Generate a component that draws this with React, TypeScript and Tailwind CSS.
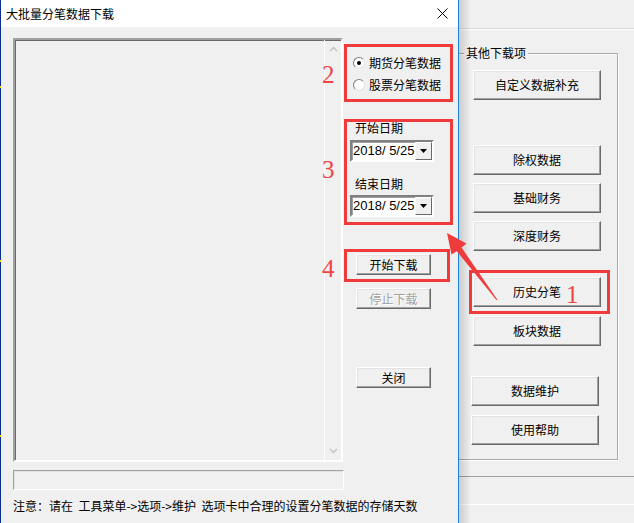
import clsx from 'clsx';
import type { ReactNode } from 'react';

const cjk = { fontFamily: '"Noto Sans CJK SC", "Noto Sans", sans-serif' };

function Btn({ children, className, disabled }: { children: ReactNode; className?: string; disabled?: boolean }) {
  return (
    <button
      className={clsx(
        'flex items-center justify-center bg-[#f0f0f0] border border-t-white border-l-white border-b-[#696969] border-r-[#696969] shadow-[inset_-1px_-1px_0_#a0a0a0,inset_1px_1px_0_#e3e3e3] text-[12px] leading-none whitespace-nowrap',
        disabled ? 'text-[#a0a0a0] [text-shadow:1px_1px_0_#fff]' : 'text-black',
        className
      )}
    >
      {children}
    </button>
  );
}

function Radio({ label, checked }: { label: string; checked?: boolean }) {
  return (
    <div className="flex items-center h-[16px] pl-[9px] gap-[4px]">
      <div className="w-[12px] h-[12px] shrink-0 rounded-full border border-t-[#808080] border-l-[#808080] border-b-[#e3e3e3] border-r-[#e3e3e3] bg-white flex items-center justify-center">
        {checked && <div className="w-[4px] h-[4px] rounded-full bg-black" />}
      </div>
      <span className="text-[12px] leading-[16px] text-black whitespace-nowrap">{label}</span>
    </div>
  );
}

function DatePicker({ value }: { value: string }) {
  return (
    <div className="ml-[6px] w-[84px] h-[22px] flex border-2 border-t-[#808080] border-l-[#808080] border-b-white border-r-white bg-white shadow-[inset_1px_1px_0_#a0a0a0]">
      <span
        className="flex-1 min-w-0 pl-[1px] text-[13px] leading-[18px] text-black whitespace-pre"
        style={{ fontFamily: '"Liberation Sans", Arial, sans-serif' }}
      >
        {value}
      </span>
      <div className="w-[17px] shrink-0 h-full flex items-center justify-center bg-[#f0f0f0] border border-t-white border-l-white border-b-[#696969] border-r-[#696969]">
        <svg width="7" height="4" viewBox="0 0 7 4">
          <polygon points="0,0 7,0 3.5,4" fill="#000" />
        </svg>
      </div>
    </div>
  );
}

function Chevron({ up }: { up?: boolean }) {
  return (
    <svg width="9" height="6" viewBox="0 0 9 6">
      <polyline
        points={up ? '1,5 4.5,1.5 8,5' : '1,1 4.5,4.5 8,1'}
        fill="none"
        stroke="#c4c4c4"
        strokeWidth="1.5"
      />
    </svg>
  );
}

function RedBox({ className }: { className: string }) {
  return <div className={clsx('absolute border-[3px] border-[#ef3b3b]', className)} />;
}

function RedNum({ n, className }: { n: string; className: string }) {
  return (
    <span
      className={clsx('absolute text-[25px] leading-none text-[#f04545]', className)}
      style={{ fontFamily: '"Liberation Serif", "Times New Roman", serif' }}
    >
      {n}
    </span>
  );
}

function BackWindow() {
  return (
    <div className="absolute inset-0 bg-[#f0f0f0] flex flex-col">
      <div className="h-[29px] border-b border-[#d9d9d9] shadow-[0_1px_0_#fff]" />
      <div className="ml-[455px] mt-[24px] w-[163px] h-[407px] border border-[#a8a8a8] shadow-[1px_1px_0_#fff,inset_1px_1px_0_#fff] relative flex flex-col pl-[17px]">
        <span className="absolute -top-[9px] left-[8px] px-[2px] bg-[#f0f0f0] text-[12px] leading-[16px] text-black">
          其他下载项
        </span>
        <Btn className="mt-[16px] w-[128px] h-[30px]">自定义数据补充</Btn>
        <Btn className="mt-[45px] w-[128px] h-[30px]">除权数据</Btn>
        <Btn className="mt-[8px] w-[128px] h-[30px]">基础财务</Btn>
        <Btn className="mt-[8px] w-[128px] h-[30px]">深度财务</Btn>
        <Btn className="mt-[26px] w-[128px] h-[30px]">历史分笔</Btn>
        <Btn className="mt-[9px] w-[128px] h-[30px]">板块数据</Btn>
        <Btn className="mt-[30px] -ml-[2px] w-[128px] h-[30px]">数据维护</Btn>
        <Btn className="mt-[9px] -ml-[2px] w-[128px] h-[30px]">使用帮助</Btn>
      </div>
      <div className="mt-[16px] h-px bg-[#a0a0a0]" />
      <div className="mt-[27px] h-px bg-white" />
      <div className="absolute left-[459px] top-0 bottom-0 w-[12px] bg-gradient-to-r from-[#00000026] to-transparent" />
    </div>
  );
}

function Dialog() {
  return (
    <div className="absolute left-0 top-0 w-[459px] h-[523px] flex">
      <div className="w-px shrink-0 h-full bg-[#0c2f8f] flex flex-col justify-around">
        <div className="h-[2px] bg-[#e8e020]" />
        <div className="h-[2px] bg-[#e8e020]" />
        <div className="h-[2px] bg-[#e8e020]" />
      </div>
      <div className="w-[458px] shrink-0 flex flex-col border-r border-[#1883d7]">
        <div className="h-[27px] bg-white flex items-center justify-between pl-[5px] pr-[10px]">
          <span className="text-[12px] leading-none text-black">大批量分笔数据下载</span>
          <svg width="11" height="11" viewBox="0 0 11 11">
            <path d="M0.5 0.5 L10.5 10.5 M10.5 0.5 L0.5 10.5" stroke="#000" strokeWidth="1" />
          </svg>
        </div>
        <div className="flex-1 bg-[#f0f0f0] flex">
          <div className="w-[343px] shrink-0 pl-[12px] pt-[11px] flex flex-col">
            <div className="w-[330px] h-[424px] flex border-2 border-t-[#a0a0a0] border-l-[#a0a0a0] border-b-white border-r-white shadow-[inset_1px_1px_0_#696969]">
              <div className="flex-1" />
              <div className="w-[17px] h-full border-l border-white flex flex-col items-center justify-between py-[6px]">
                <Chevron up />
                <Chevron />
              </div>
            </div>
            <div className="mt-[8px] w-[331px] h-[20px] border border-t-[#a0a0a0] border-l-[#a0a0a0] border-b-white border-r-white shadow-[inset_1px_1px_0_#e3e3e3]" />
            <p className="mt-[8px] w-max text-[12px] leading-[16px] text-black whitespace-pre">
              注意：请在  工具菜单-&gt;选项-&gt;维护  选项卡中合理的设置分笔数据的存储天数
            </p>
          </div>
          <div className="w-[114px] shrink-0 flex flex-col pt-[28px]">
            <Radio label="期货分笔数据" checked />
            <div className="mt-[6px]">
              <Radio label="股票分笔数据" />
            </div>
            <span className="mt-[27px] pl-[11px] text-[12px] leading-[16px] text-black">开始日期</span>
            <div className="mt-[4px]">
              <DatePicker value="2018/ 5/25" />
            </div>
            <span className="mt-[14px] pl-[11px] text-[12px] leading-[16px] text-black">结束日期</span>
            <div className="mt-[3px]">
              <DatePicker value="2018/ 5/25" />
            </div>
            <Btn className="mt-[37px] ml-[12px] w-[75px] h-[21px]">开始下载</Btn>
            <Btn className="mt-[13px] ml-[12px] w-[75px] h-[21px]" disabled>
              停止下载
            </Btn>
            <Btn className="mt-[58px] ml-[12px] w-[75px] h-[21px]">关闭</Btn>
          </div>
        </div>
      </div>
    </div>
  );
}

export default function App() {
  return (
    <div className="relative w-[634px] h-[523px] overflow-hidden bg-[#f0f0f0]" style={cjk}>
      <BackWindow />
      <Dialog />

      <RedBox className="left-[344px] top-[44px] w-[109px] h-[58px]" />
      <RedBox className="left-[344px] top-[119px] w-[109px] h-[106px]" />
      <RedBox className="left-[344px] top-[249px] w-[106px] h-[33px]" />
      <RedBox className="left-[469px] top-[270px] w-[141px] h-[44px]" />

      <RedNum n="2" className="left-[322px] top-[62px]" />
      <RedNum n="3" className="left-[322px] top-[157px]" />
      <RedNum n="4" className="left-[322px] top-[256px]" />
      <RedNum n="1" className="left-[566px] top-[282px]" />

      <svg className="absolute left-0 top-0" width="634" height="523" viewBox="0 0 634 523">
        <polygon
          points="497.4,299.7 461.5,247.5 466.5,243.5 447,233 451.5,254.5 456.8,251.2 496.6,300.3"
          fill="#ef3b3b"
        />
      </svg>
    </div>
  );
}
